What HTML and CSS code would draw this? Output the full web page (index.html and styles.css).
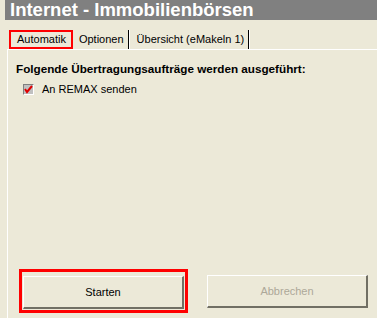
FILE: index.html
```html
<!DOCTYPE html>
<html lang="de">
<head>
    <meta charset="UTF-8">
    <title>Internet - Immobilienbörsen</title>
    <link rel="stylesheet" href="styles.css">
</head>
<body>
    <header class="title-bar"><h1>Internet - Immobilienbörsen</h1></header>
    <div class="tab-row">
        <div class="tab active">Automatik</div>
        <div class="tab">Optionen</div>
        <div class="tab">Übersicht (eMakeln 1)</div>
    </div>
    <div class="panel">
        <h2 class="panel-heading">Folgende Übertragungsaufträge werden ausgeführt:</h2>
        <label class="check-row">
            <span class="check-box">
                <svg width="9" height="9" viewBox="0 0 9 9"><path d="M1 4 L3 7 L8 1" fill="none" stroke="#e00000" stroke-width="2"/></svg>
            </span>
            An REMAX senden
        </label>
        <div class="button-row">
            <div class="btn-frame"><button class="btn">Starten</button></div>
            <button class="btn" disabled>Abbrechen</button>
        </div>
    </div>
</body>
</html>
```

FILE: styles.css
```css
body, html { margin: 0; padding: 0; background-color: #ece9d8; font-family: "Liberation Sans", Arial, sans-serif; font-size: 11px; color: #000; }
body { width: 377px; height: 318px; overflow: hidden; display: flex; flex-direction: column; }
.title-bar { margin-left: 5px; height: 20px; background-color: #808080; color: white; padding-left: 5px; }
.title-bar h1 { margin: 0; font-size: 18.5px; line-height: 20px; font-weight: bold; }
.tab-row { display: flex; margin-top: 10px; padding-left: 9px; height: 19px; align-items: stretch; }
.tab { padding: 0 4px 0 6px; line-height: 19px; border-right: 1px solid #000; box-shadow: 1px 0 0 #fff; margin-right: 2px; }
.tab.active { border: 2px solid #f00; padding: 0 5px 0 6px; line-height: 15px; margin-right: 0; box-shadow: none; }
.panel { flex: 1; margin-left: 7px; border-top: 1px solid #fff; border-left: 1px solid #fff; display: flex; flex-direction: column; padding-left: 8px; }
.panel-heading { margin: 12px 0 0 0; font-size: 11.7px; font-weight: bold; }
.check-row { display: flex; align-items: center; gap: 8px; margin: 8px 0 0 7px; }
.check-box { width: 11px; height: 11px; background-color: #c0c0c0; border-top: 1px solid #808080; border-left: 1px solid #808080; border-bottom: 1px solid #fff; border-right: 1px solid #fff; display: flex; align-items: center; justify-content: center; box-sizing: border-box; }
.button-row { margin-top: auto; display: flex; align-items: center; gap: 19px; padding: 0 0 5px 3px; }
.btn-frame { border: 3px solid #f00; padding: 4px 1px 1px 1px; }
.btn { width: 161px; height: 33px; background-color: #ece9d8; border-top: 1px solid #fff; border-left: 1px solid #fff; border-right: 2px solid #716f64; border-bottom: 2px solid #716f64; font-family: "Liberation Sans", Arial, sans-serif; font-size: 11px; color: #000; padding: 0; }
.btn:disabled { color: #aca899; }
```
